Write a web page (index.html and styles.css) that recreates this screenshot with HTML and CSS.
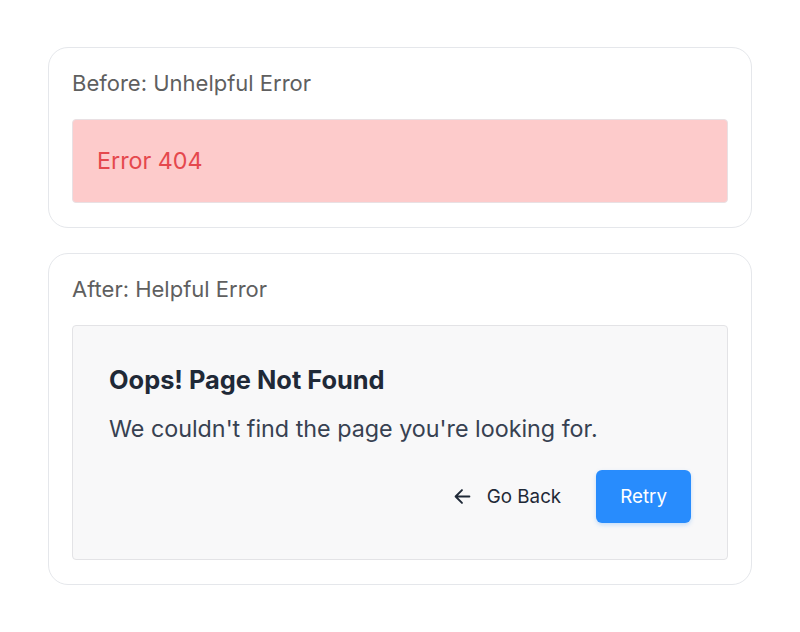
FILE: index.html
```html
<!DOCTYPE html>
<html lang="en">
<head>
    <meta charset="UTF-8">
    <title>Error messages</title>
    <link rel="stylesheet" href="styles.css">
</head>
<body>
<div class="page">
    <div class="card">
        <div class="card-title">Before: Unhelpful Error</div>
        <div class="bad-error">Error 404</div>
    </div>
    <div class="card">
        <div class="card-title">After: Helpful Error</div>
        <div class="good-error">
            <h2>Oops! Page Not Found</h2>
            <p>We couldn't find the page you're looking for.</p>
            <div class="actions">
                <button class="btn btn-back">
                    <svg width="17" height="17" viewBox="0 0 16 16" fill="none" stroke="#1f2937" stroke-width="1.8" stroke-linecap="round" stroke-linejoin="round">
                        <path d="M14.5 8H1.5M7.5 2L1.5 8l6 6"/>
                    </svg>
                    Go Back
                </button>
                <button class="btn btn-retry">Retry</button>
            </div>
        </div>
    </div>
</div>
</body>
</html>
```

FILE: styles.css
```css
* {
    padding: 0;
    margin: 0;
    box-sizing: border-box;
}

body {
    background: #fff;
    font-family: Inter, "Noto Sans", sans-serif;
}

.page {
    width: 704px;
    margin: 47px auto 0;
    display: flex;
    flex-direction: column;
    gap: 25px;
}

.card {
    border: 1px solid #e5e7eb;
    border-radius: 20px;
    padding: 23px 23px 24px;
}

.card-title {
    font-size: 22px;
    line-height: 24px;
    color: #5f5f5f;
    margin-bottom: 24px;
}

.bad-error {
    background: #fdcbcb;
    border: 1px solid #e9e0e3;
    border-radius: 4px;
    padding: 24px;
    font-size: 23.3px;
    line-height: 34px;
    color: #e5484d;
}

.good-error {
    background: #f8f8f9;
    border: 1px solid #e3e3e6;
    border-radius: 4px;
    padding: 36px;
}

.good-error h2 {
    font-size: 25.4px;
    line-height: 36px;
    font-weight: 700;
    color: #1f2937;
    margin-bottom: 16px;
}

.good-error p {
    font-size: 23.3px;
    line-height: 30px;
    color: #374151;
}

.actions {
    display: flex;
    justify-content: flex-end;
    gap: 11px;
    margin-top: 26px;
}

.btn {
    font-family: inherit;
    font-size: 18.8px;
    line-height: 29px;
    padding: 12px 24px;
    border: 0;
    border-radius: 6px;
    cursor: pointer;
    display: flex;
    align-items: center;
}

.btn-back {
    background: transparent;
    color: #1f2937;
    gap: 16px;
}

.btn-retry {
    background: #288cfd;
    color: #fff;
    box-shadow: 0 2px 4px rgba(40, 140, 253, 0.25);
}
```
